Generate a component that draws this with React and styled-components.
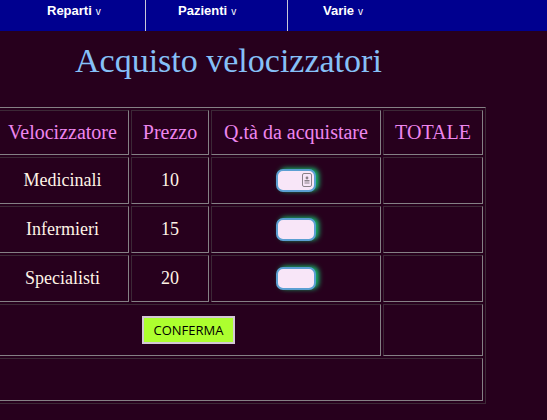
import React from 'react';
import styled, { createGlobalStyle } from 'styled-components';

const GlobalStyle = createGlobalStyle`
    html, body {
        margin: 0;
        padding: 0;
        background: #27001d;
        overflow: hidden;
    }
    body {
        font-family: "Liberation Serif", "Times New Roman", serif;
    }
`;

const Page = styled.div`
    width: 547px;
    height: 420px;
    background: #27001d;
`;

const NavBar = styled.nav`
    display: flex;
    height: 31px;
    background: #00008f;
`;

const NavItem = styled.div`
    box-sizing: border-box;
    width: ${props => props.width}px;
    padding: 3px 0 0 ${props => props.offset}px;
    border-right: ${props => (props.last ? 'none' : '1px solid #c8c8d8')};
    font-family: "Liberation Sans", Arial, sans-serif;
    font-size: 13px;
    font-weight: bold;
    line-height: 15px;
    color: #ffffff;
    white-space: nowrap;
`;

const Caret = styled.span`
    font-size: 10px;
    font-weight: normal;
    margin-left: 4px;
`;

const Title = styled.h1`
    margin: 10px 0 27px 75px;
    font-size: 34px;
    font-weight: normal;
    line-height: 39px;
    color: #86c0f8;
`;

const Table = styled.table`
    margin-left: -7px;
    width: 493px;
    table-layout: fixed;
    border-collapse: separate;
    border-spacing: 2px;
    border-width: 1px;
    border-style: solid;
    border-color: #858085 #3c2836 #3c2836 #858085;
`;

const Cell = styled.td`
    box-sizing: border-box;
    padding: 0;
    height: ${props => props.h || 47}px;
    width: ${props => (props.w ? `${props.w}px` : 'auto')};
    border-width: 1px;
    border-style: solid;
    border-color: #3c2836 #858085 #858085 #3c2836;
    text-align: center;
    vertical-align: middle;
    font-size: 18px;
    color: #fff3e6;
`;

const HeadCell = styled(Cell).attrs({ as: 'th' })`
    font-size: 20px;
    font-weight: normal;
    color: #ee86ee;
`;

const QtyBox = styled.div`
    position: relative;
    display: inline-block;
    vertical-align: middle;
`;

const QtyInput = styled.input`
    box-sizing: border-box;
    width: 40px;
    height: 23px;
    border: 2px solid #5b9fd2;
    border-radius: 7px;
    background: #f8e6f8;
    box-shadow: 3px -1px 5px rgba(20, 220, 120, 0.85);
    outline: none;
    display: block;
`;

const FillIcon = styled.svg`
    position: absolute;
    top: 4px;
    right: 4px;
`;

const ConfirmButton = styled.button`
    box-sizing: border-box;
    width: 93px;
    height: 28px;
    padding: 0;
    border: 2px solid #d4c8d4;
    background: #adff2f;
    font-family: "Open Sans", "Liberation Sans", sans-serif;
    font-size: 13px;
    color: #000000;
    vertical-align: middle;
`;

const rows = [
    { name: 'Medicinali', price: 10, icon: true },
    { name: 'Infermieri', price: 15 },
    { name: 'Specialisti', price: 20 },
];

export default function App() {
    return (
        <Page>
            <GlobalStyle />
            <NavBar>
                <NavItem width={146} offset={47}>Reparti<Caret>v</Caret></NavItem>
                <NavItem width={142} offset={32}>Pazienti<Caret>v</Caret></NavItem>
                <NavItem width={259} offset={35} last>Varie<Caret>v</Caret></NavItem>
            </NavBar>
            <Title>Acquisto velocizzatori</Title>
            <Table>
                <thead>
                    <tr>
                        <HeadCell h={45} w={133}>Velocizzatore</HeadCell>
                        <HeadCell h={45} w={78}>Prezzo</HeadCell>
                        <HeadCell h={45} w={170}>Q.tà da acquistare</HeadCell>
                        <HeadCell h={45} w={100}>TOTALE</HeadCell>
                    </tr>
                </thead>
                <tbody>
                    {rows.map(row => (
                        <tr key={row.name}>
                            <Cell>{row.name}</Cell>
                            <Cell>{row.price}</Cell>
                            <Cell>
                                <QtyBox>
                                    <QtyInput type="text" />
                                    {row.icon && (
                                        <FillIcon width="10" height="14" viewBox="0 0 10 14">
                                            <rect x="0.5" y="0.5" width="9" height="13" rx="1.5" fill="none" stroke="#8a8088" />
                                            <circle cx="5" cy="5" r="1.4" fill="#8a8088" />
                                            <rect x="2.5" y="7" width="5" height="1.5" fill="#8a8088" />
                                            <rect x="2.5" y="9.5" width="5" height="1" fill="#8a8088" />
                                        </FillIcon>
                                    )}
                                </QtyBox>
                            </Cell>
                            <Cell />
                        </tr>
                    ))}
                    <tr>
                        <Cell h={52} colSpan={3}>
                            <ConfirmButton>CONFERMA</ConfirmButton>
                        </Cell>
                        <Cell h={52} />
                    </tr>
                    <tr>
                        <Cell h={43} colSpan={4} />
                    </tr>
                </tbody>
            </Table>
        </Page>
    );
}
